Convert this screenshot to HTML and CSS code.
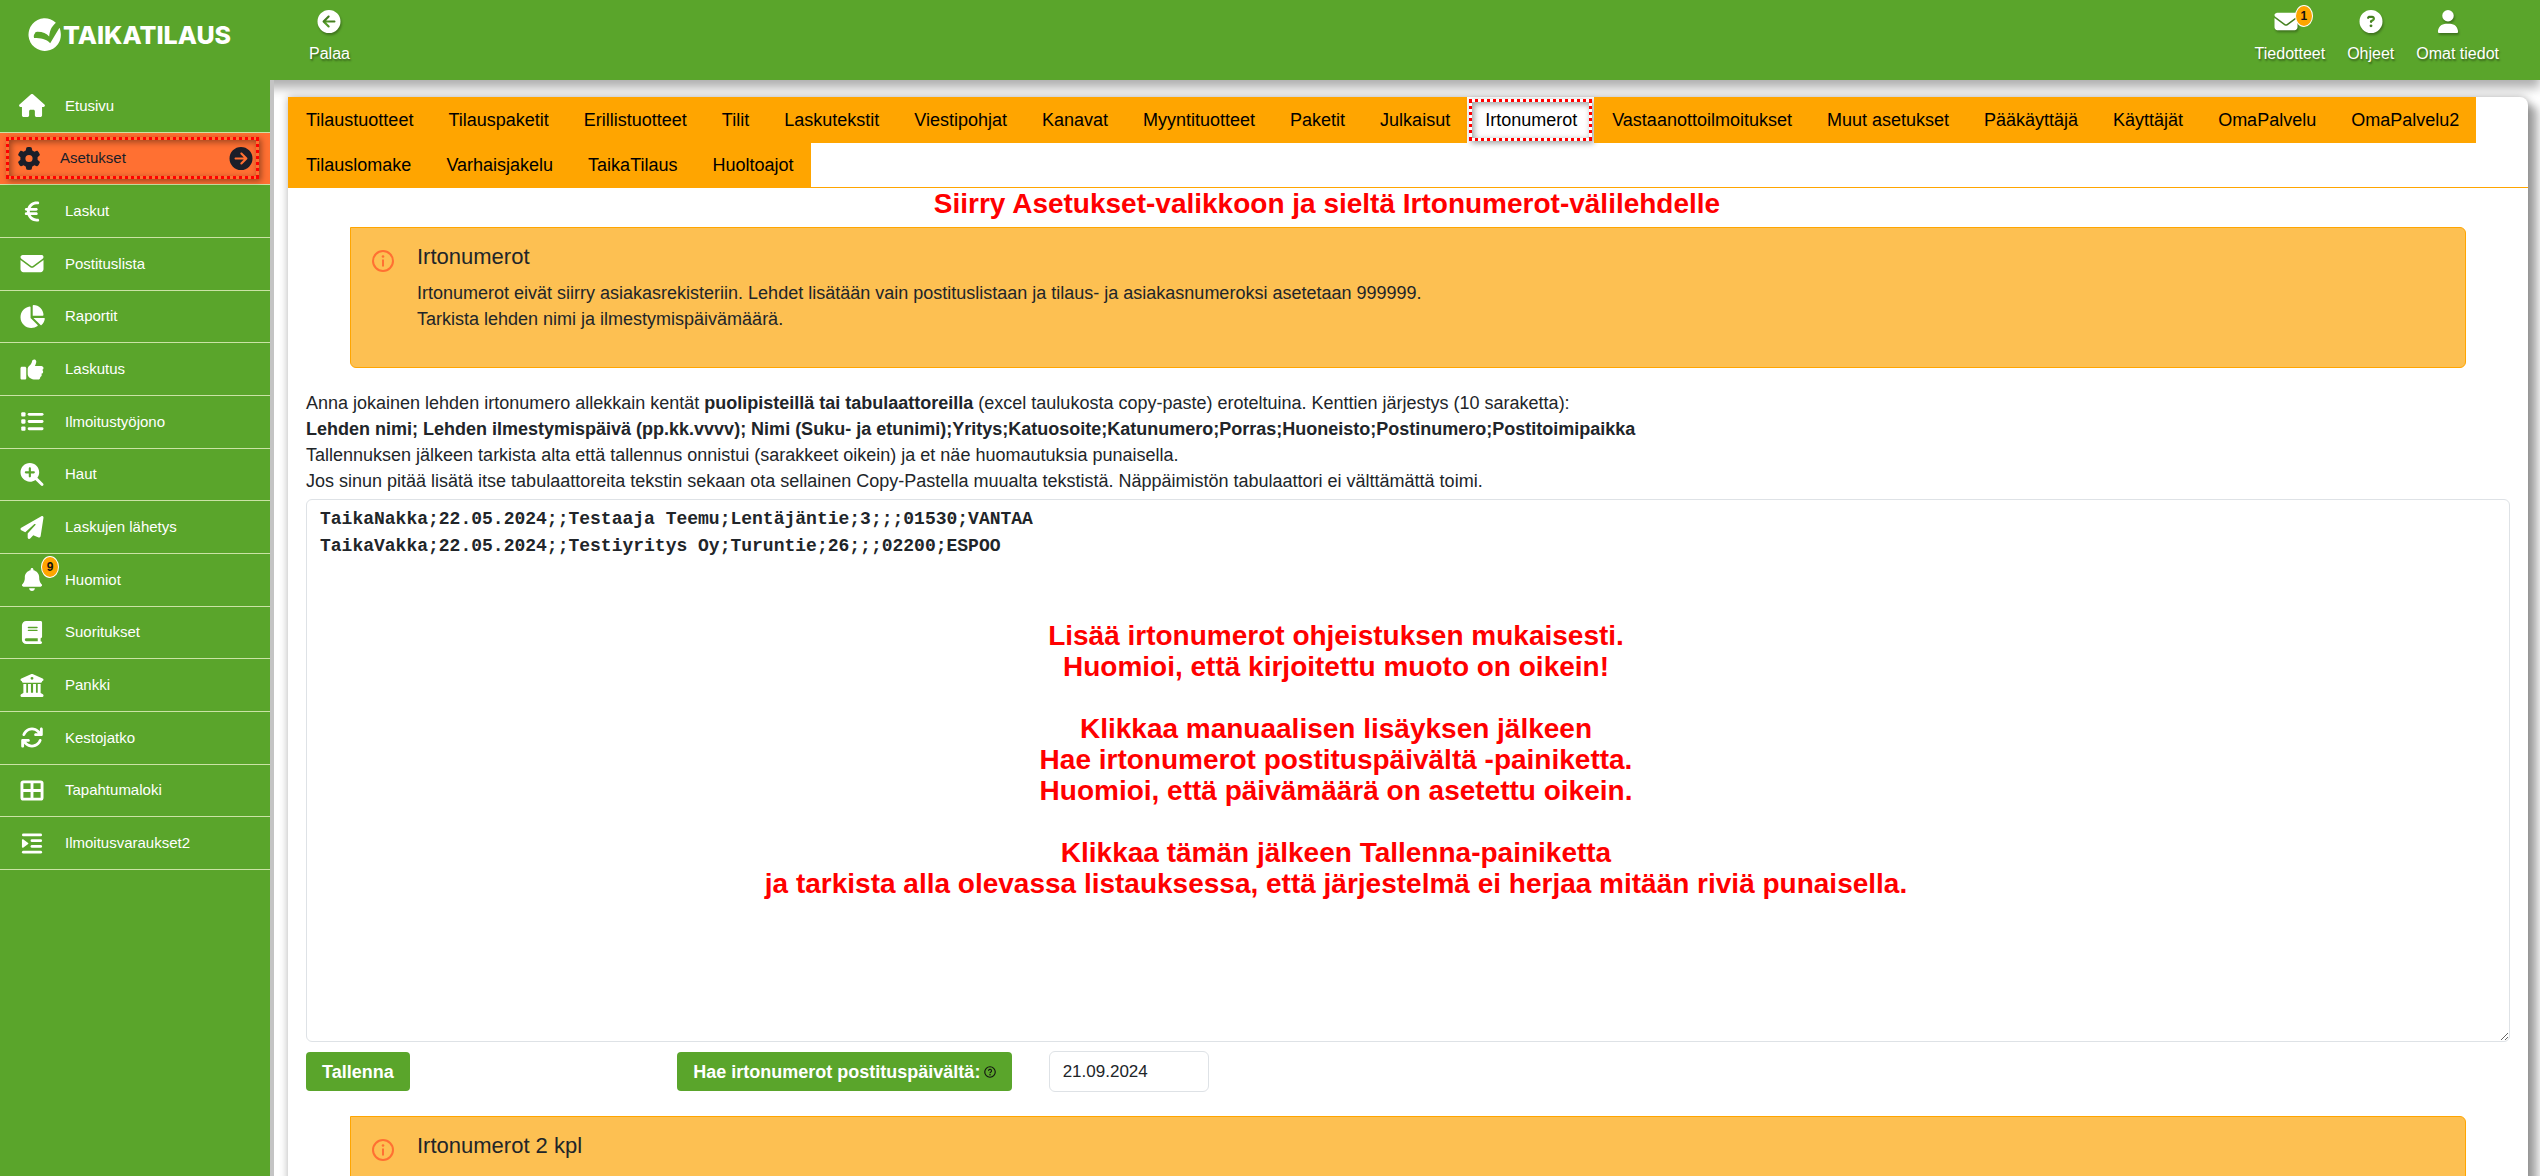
FILE: index.html
```html
<!DOCTYPE html>
<html lang="fi">
<head>
<meta charset="utf-8">
<meta name="viewport" content="width=device-width, initial-scale=1">
<title>TaikaTilaus – Irtonumerot</title>
<link rel="stylesheet" href="styles.css">
</head>
<body>
<svg class="sprite" aria-hidden="true">
  <symbol id="i-house" viewBox="0 0 576 512"><path d="M575.8 255.5c0 18-15 32.1-32 32.1h-32l.7 160.2c0 2.7-.2 5.4-.5 8.1V472c0 22.1-17.9 40-40 40H456c-1.1 0-2.2 0-3.3-.1c-1.4 .1-2.8 .1-4.2 .1H416 392c-22.1 0-40-17.9-40-40V448 384c0-17.7-14.3-32-32-32H256c-17.7 0-32 14.3-32 32v64 24c0 22.1-17.9 40-40 40H160 128.1c-1.5 0-3-.1-4.5-.2c-1.2 .1-2.4 .2-3.6 .2H104c-22.1 0-40-17.9-40-40V360c0-.9 0-1.9 .1-2.8V287.6H32c-18 0-32-14-32-32.1c0-9 3-17 10-24L266.4 8c7-7 15-8 22-8s15 2 21 7L564.8 231.5c8 7 12 15 11 24z"/></symbol>
  <symbol id="i-gear" viewBox="0 0 512 512"><path d="M495.9 166.6c3.2 8.7 .5 18.4-6.4 24.6l-43.3 39.4c1.1 8.3 1.7 16.8 1.7 25.4s-.6 17.1-1.7 25.4l43.3 39.4c6.9 6.2 9.6 15.9 6.4 24.6c-4.4 11.9-9.7 23.3-15.8 34.3l-4.7 8.1c-6.6 11-14 21.4-22.1 31.2c-5.9 7.2-15.7 9.6-24.5 6.8l-55.7-17.7c-13.4 10.3-28.2 18.9-44 25.4l-12.5 57.1c-2 9.1-9 16.3-18.2 17.8c-13.8 2.3-28 3.5-42.5 3.5s-28.7-1.2-42.5-3.5c-9.2-1.5-16.2-8.7-18.2-17.8l-12.5-57.1c-15.8-6.5-30.6-15.1-44-25.4L83.1 425.9c-8.8 2.8-18.6 .3-24.5-6.8c-8.1-9.8-15.5-20.2-22.1-31.2l-4.7-8.1c-6.1-11-11.4-22.4-15.8-34.3c-3.2-8.7-.5-18.4 6.4-24.6l43.3-39.4C64.6 273.1 64 264.6 64 256s.6-17.1 1.7-25.4L22.4 191.2c-6.9-6.2-9.6-15.9-6.4-24.6c4.4-11.9 9.7-23.3 15.8-34.3l4.7-8.1c6.6-11 14-21.4 22.1-31.2c5.9-7.2 15.7-9.6 24.5-6.8l55.7 17.7c13.4-10.3 28.2-18.9 44-25.4l12.5-57.1c2-9.1 9-16.3 18.2-17.8C227.3 1.2 241.5 0 256 0s28.7 1.2 42.5 3.5c9.2 1.5 16.2 8.7 18.2 17.8l12.5 57.1c15.8 6.5 30.6 15.1 44 25.4l55.7-17.7c8.8-2.8 18.6-.3 24.5 6.8c8.1 9.8 15.5 20.2 22.1 31.2l4.7 8.1c6.1 11 11.4 22.4 15.8 34.3zM256 336a80 80 0 1 0 0-160 80 80 0 1 0 0 160z"/></symbol>
  <symbol id="i-euro" viewBox="0 0 320 512"><path d="M48.1 240c-.1 2.7-.1 5.3-.1 8v16c0 2.7 0 5.3 .1 8H32c-17.7 0-32 14.3-32 32s14.3 32 32 32H60.3C89.9 419.9 170 480 264 480h24c17.7 0 32-14.3 32-32s-14.3-32-32-32H264c-57.9 0-108.2-32.4-133.9-80H256c17.7 0 32-14.3 32-32s-14.3-32-32-32H112.2c-.1-2.6-.2-5.3-.2-8V248c0-2.7 .1-5.4 .2-8H256c17.7 0 32-14.3 32-32s-14.3-32-32-32H130.1c25.7-47.6 76-80 133.9-80h24c17.7 0 32-14.3 32-32s-14.3-32-32-32H264C170 32 89.9 92.1 60.3 176H32c-17.7 0-32 14.3-32 32s14.3 32 32 32H48.1z"/></symbol>
  <symbol id="i-mail" viewBox="0 0 512 512"><path d="M48 64C21.5 64 0 85.5 0 112c0 15.1 7.1 29.3 19.2 38.4L236.8 313.6c11.4 8.5 27 8.5 38.4 0L492.8 150.4c12.1-9.1 19.2-23.3 19.2-38.4c0-26.5-21.5-48-48-48H48zM0 176V384c0 35.3 28.7 64 64 64H448c35.3 0 64-28.7 64-64V176L294.4 339.2c-22.8 17.1-54 17.1-76.8 0L0 176z"/></symbol>
  <symbol id="i-pie" viewBox="0 0 576 512"><path d="M304 240V16.6c0-9 7-16.6 16-16.6C443.7 0 544 100.3 544 224c0 9-7.6 16-16.6 16H304zM32 272C32 150.7 122.1 50.3 239 34.3c9.2-1.3 17 6.1 17 15.4V288L412.5 444.5c6.7 6.7 6.2 17.7-1.5 23.1C371.8 495.6 323.8 512 272 512C139.5 512 32 404.6 32 272zm526.4 16c9.3 0 16.6 7.8 15.4 17c-7.7 55.9-34.6 105.6-73.9 142.3c-6 5.6-15.4 5.2-21.2-.7L320 288H558.4z"/></symbol>
  <symbol id="i-thumb" viewBox="0 0 512 512"><path d="M313.4 32.9c26 5.2 42.9 30.5 37.7 56.5l-2.3 11.4c-5.3 26.7-15.1 52.1-28.8 75.2H464c26.5 0 48 21.5 48 48c0 18.5-10.5 34.6-25.9 42.6C497 275.4 504 288.9 504 304c0 23.4-16.8 42.9-38.9 47.1c4.4 7.3 6.9 15.8 6.9 24.9c0 21.3-13.9 39.4-33.1 45.6c.7 3.3 1.1 6.8 1.1 10.4c0 26.5-21.5 48-48 48H294.5c-19 0-37.5-5.6-53.3-16.1l-38.5-25.7C176 420.4 160 390.4 160 358.3V320 272 247.1c0-29.2 13.3-56.7 36-75l7.4-5.9c26.5-21.2 44.6-51 51.2-84.2l2.3-11.4c5.2-26 30.5-42.9 56.5-37.7zM32 192H96c17.7 0 32 14.3 32 32V448c0 17.7-14.3 32-32 32H32c-17.7 0-32-14.3-32-32V224c0-17.7 14.3-32 32-32z"/></symbol>
  <symbol id="i-list" viewBox="0 0 512 512"><rect x="16" y="48" width="96" height="96" rx="24"/><rect x="16" y="208" width="96" height="96" rx="24"/><rect x="16" y="368" width="96" height="96" rx="24"/><rect x="160" y="64" width="352" height="64" rx="32"/><rect x="160" y="224" width="352" height="64" rx="32"/><rect x="160" y="384" width="352" height="64" rx="32"/></symbol>
  <symbol id="i-search" viewBox="0 0 512 512"><path d="M416 208c0 45.9-14.9 88.3-40 122.7L502.6 457.4c12.5 12.5 12.5 32.8 0 45.3s-32.8 12.5-45.3 0L330.7 376c-34.4 25.2-76.8 40-122.7 40C93.1 416 0 322.9 0 208S93.1 0 208 0S416 93.1 416 208zM184 296c0 13.3 10.7 24 24 24s24-10.7 24-24V232h64c13.3 0 24-10.7 24-24s-10.7-24-24-24H232V120c0-13.3-10.7-24-24-24s-24 10.7-24 24v64H120c-13.3 0-24 10.7-24 24s10.7 24 24 24h64v64z"/></symbol>
  <symbol id="i-plane" viewBox="0 0 512 512"><path d="M498.1 5.6c10.1 7 15.4 19.1 13.5 31.2l-64 416c-1.5 9.7-7.4 18.2-16 23s-18.9 5.4-28 1.6L284 427.7l-68.5 74.1c-8.9 9.7-22.9 12.9-35.2 8.1S160 493.2 160 480V396.4c0-4 1.5-7.8 4.2-10.7L331.8 202.8c5.8-6.3 5.6-16-.4-22s-15.7-6.4-22-.7L106 360.8 17.7 316.6C7.1 311.3 .3 300.7 0 288.9s5.9-22.8 16.1-28.7l448-256c10.7-6.1 23.9-5.5 34 1.4z"/></symbol>
  <symbol id="i-bell" viewBox="0 0 448 512"><path d="M224 0c-17.7 0-32 14.3-32 32V51.2C119 66 64 130.6 64 208v18.8c0 47-17.3 92.4-48.5 127.6l-7.4 8.3c-8.4 9.4-10.4 22.9-5.3 34.4S19.4 416 32 416H416c12.6 0 24-7.4 29.2-18.9s3.1-25-5.3-34.4l-7.4-8.3C401.3 319.2 384 273.9 384 226.8V208c0-77.4-55-142-128-156.8V32c0-17.7-14.3-32-32-32zm45.3 493.3c12-12 18.7-28.3 18.7-45.3H224 160c0 17 6.7 33.3 18.7 45.3s28.3 18.7 45.3 18.7s33.3-6.7 45.3-18.7z"/></symbol>
  <symbol id="i-book" viewBox="0 0 448 512"><path d="M96 0C43 0 0 43 0 96V416c0 53 43 96 96 96H384h32c17.7 0 32-14.3 32-32s-14.3-32-32-32V384c17.7 0 32-14.3 32-32V32c0-17.7-14.3-32-32-32H384 96zm0 384H352v64H96c-17.7 0-32-14.3-32-32s14.3-32 32-32zm32-240c0-8.8 7.2-16 16-16H336c8.8 0 16 7.2 16 16s-7.2 16-16 16H144c-8.8 0-16-7.2-16-16zm16 48H336c8.8 0 16 7.2 16 16s-7.2 16-16 16H144c-8.8 0-16-7.2-16-16s7.2-16 16-16z"/></symbol>
  <symbol id="i-bank" viewBox="0 0 512 512"><path d="M243.4 2.6l-224 96c-14 6-21.8 21-18.7 35.8S16.8 160 32 160v8c0 13.3 10.7 24 24 24H456c13.3 0 24-10.7 24-24v-8c15.2 0 28.3-10.7 31.3-25.6s-4.8-29.9-18.7-35.8l-224-96c-8-3.4-17.2-3.4-25.2 0zM128 224H64V420.3c-.6 .3-1.2 .7-1.8 1.1l-48 32c-11.7 7.8-17 22.4-12.9 35.9S17.9 512 32 512H480c14.1 0 26.5-9.2 30.6-22.7s-1.1-28.1-12.9-35.9l-48-32c-.6-.4-1.2-.7-1.8-1.1V224H384V416H344V224H280V416H232V224H168V416H128V224zM256 64a32 32 0 1 1 0 64 32 32 0 1 1 0-64z"/></symbol>
  <symbol id="i-rotate" viewBox="0 0 512 512"><path d="M105.1 202.6c7.7-21.8 20.2-42.3 37.8-59.8c62.5-62.5 163.8-62.5 226.3 0L386.3 160H336c-17.7 0-32 14.3-32 32s14.3 32 32 32H463.5h.4c17.7 0 32-14.3 32-32V64c0-17.7-14.3-32-32-32s-32 14.3-32 32v51.2L414.4 97.6c-87.5-87.5-229.3-87.5-316.8 0C73.2 122 55.6 150.7 44.8 181.4c-5.9 16.7 2.9 34.9 19.5 40.8s34.9-2.9 40.8-19.5zM39 289.3c-5 1.5-9.8 4.2-13.7 8.2c-4 4-6.7 8.8-8.1 14c-.3 1.2-.6 2.5-.8 3.8c-.3 1.7-.4 3.4-.4 5.1V448c0 17.7 14.3 32 32 32s32-14.3 32-32V396.9l17.6 17.5c87.5 87.4 229.3 87.4 316.7 0c24.4-24.4 42.1-53.1 52.9-83.7c5.9-16.7-2.9-34.9-19.5-40.8s-34.9 2.9-40.8 19.5c-7.7 21.8-20.2 42.3-37.8 59.8c-62.5 62.5-163.8 62.5-226.3 0l-.1-.1L125.6 352H176c17.7 0 32-14.3 32-32s-14.3-32-32-32H48.4c-1.6 0-3.2 .1-4.8 .3s-3.1 .5-4.6 1z"/></symbol>
  <symbol id="i-table" viewBox="0 0 512 512"><path fill-rule="evenodd" d="M64 32H448a64 64 0 0 1 64 64V416a64 64 0 0 1-64 64H64a64 64 0 0 1-64-64V96a64 64 0 0 1 64-64zM64 96V224H224V96zM288 96V224H448V96zM64 288V416H224V288zM288 288V416H448V288z"/></symbol>
  <symbol id="i-indent" viewBox="0 0 448 512"><rect y="32" width="448" height="64" rx="32"/><rect x="192" y="160" width="256" height="64" rx="32"/><rect x="192" y="288" width="256" height="64" rx="32"/><rect y="416" width="448" height="64" rx="32"/><path d="M0 178c0-16 15-24 26-14l112 79c9 7 9 19 0 26L26 348c-11 10-26 2-26-13z"/></symbol>
  <symbol id="i-arrow" viewBox="0 0 512 512"><path fill-rule="evenodd" d="M512 256A256 256 0 1 0 0 256a256 256 0 1 0 512 0zM231 127c9.400-9.400 24.600-9.400 33.900 0s9.400 24.600 0 33.900l-71 71L376 232c13.300 0 24 10.700 24 24s-10.700 24-24 24l-182.100 0 71 71c9.400 9.400 9.400 24.600 0 33.900s-24.600 9.400-33.900 0L119 273c-9.400-9.400-9.400-24.600 0-33.900L231 127z"/></symbol>
  <symbol id="i-question" viewBox="0 0 512 512"><path fill-rule="evenodd" d="M256 512A256 256 0 1 0 256 0a256 256 0 1 0 0 512zM169.800 165.300c7.900-22.300 29.100-37.300 52.800-37.300h58.300c34.900 0 63.100 28.300 63.100 63.100c0 22.600-12.100 43.500-31.700 54.800L280 264.400c-.2 13-10.900 23.600-24 23.600c-13.300 0-24-10.700-24-24V250.500c0-8.600 4.600-16.500 12.100-20.800l44.300-25.400c4.700-2.700 7.600-7.700 7.600-13.100c0-8.400-6.800-15.100-15.100-15.100H222.600c-3.400 0-6.400 2.100-7.500 5.300l-.4 1.200c-4.400 12.500-18.200 19-30.700 14.600s-19-18.200-14.600-30.700l.4-1.200zM224 352a32 32 0 1 1 64 0 32 32 0 1 1 -64 0z"/></symbol>
  <symbol id="i-question-o" viewBox="0 0 16 16"><circle cx="8" cy="8" r="7" fill="none" stroke="currentColor" stroke-width="1.500"/><path d="M6 6.500a2 2 0 1 1 2.800 1.800c-.6.300-.8.600-.8 1.200" fill="none" stroke="currentColor" stroke-width="1.400"/><circle cx="8" cy="11.700" r="1"/></symbol>
  <symbol id="i-user" viewBox="0 0 448 512"><path d="M224 256A128 128 0 1 0 224 0a128 128 0 1 0 0 256zm-45.700 48C79.800 304 0 383.800 0 482.300C0 498.700 13.300 512 29.700 512H418.300c16.400 0 29.700-13.300 29.700-29.700C448 383.800 368.200 304 269.700 304H178.300z"/></symbol>
  <symbol id="i-info" viewBox="0 0 22 22"><circle cx="11" cy="11" r="10" fill="none" stroke="currentColor" stroke-width="2"/><circle cx="11" cy="6.500" r="1.300"/><path d="M10 9.500h2v7h-2z"/></symbol>
  <symbol id="i-logo" viewBox="0 0 32 32"><path d="M27 4.500A15.800 15.800 0 1 0 29 25.500C32.500 21 32.500 14 30.500 9.500L21.500 24.500C18 20.500 12 19.500 6 19.500C5 17 6 15 8 13.500C13 13 18 15 20.500 18C21 13 22 9 27 4.500z"/><path d="M7 16.500c6-1 10 1 13.500 5M7 14.500c6-.5 10.500 1.500 13.500 5.500" fill="none" stroke="#5aa52b" stroke-width="1"/></symbol>
</svg>

<div class="app">
  <header class="topbar">
    <a class="brand" href="#"><svg class="brand-mark"><use href="#i-logo"/></svg><span>TAIKATILAUS</span></a>
    <a class="top-link" href="#"><svg class="icon"><use href="#i-arrow"/></svg><span>Palaa</span></a>
    <nav class="top-links">
      <a class="top-link" href="#"><span class="icon-wrap with-badge"><svg class="icon"><use href="#i-mail"/></svg><b class="badge">1</b></span><span>Tiedotteet</span></a>
      <a class="top-link" href="#"><svg class="icon"><use href="#i-question"/></svg><span>Ohjeet</span></a>
      <a class="top-link" href="#"><span class="icon-wrap with-caret"><svg class="icon"><use href="#i-user"/></svg></span><span>Omat tiedot</span></a>
    </nav>
  </header>

  <div class="body">
    <nav class="sidebar">
      <ul class="menu">
        <li><a href="#"><svg class="icon"><use href="#i-house"/></svg>Etusivu</a></li>
        <li class="active"><a href="#"><svg class="icon"><use href="#i-gear"/></svg>Asetukset<svg class="icon go"><use href="#i-arrow"/></svg></a><span class="marker"></span></li>
        <li><a href="#"><svg class="icon"><use href="#i-euro"/></svg>Laskut</a></li>
        <li><a href="#"><svg class="icon"><use href="#i-mail"/></svg>Postituslista</a></li>
        <li><a href="#"><svg class="icon"><use href="#i-pie"/></svg>Raportit</a></li>
        <li><a href="#"><svg class="icon"><use href="#i-thumb"/></svg>Laskutus</a></li>
        <li><a href="#"><svg class="icon"><use href="#i-list"/></svg>Ilmoitustyöjono</a></li>
        <li><a href="#"><svg class="icon"><use href="#i-search"/></svg>Haut</a></li>
        <li><a href="#"><svg class="icon"><use href="#i-plane"/></svg>Laskujen lähetys</a></li>
        <li><a href="#"><span class="icon-wrap"><svg class="icon"><use href="#i-bell"/></svg><b class="badge">9</b></span>Huomiot</a></li>
        <li><a href="#"><svg class="icon"><use href="#i-book"/></svg>Suoritukset</a></li>
        <li><a href="#"><svg class="icon"><use href="#i-bank"/></svg>Pankki</a></li>
        <li><a href="#"><svg class="icon"><use href="#i-rotate"/></svg>Kestojatko</a></li>
        <li><a href="#"><svg class="icon"><use href="#i-table"/></svg>Tapahtumaloki</a></li>
        <li><a href="#"><svg class="icon"><use href="#i-indent"/></svg>Ilmoitusvaraukset2</a></li>
      </ul>
    </nav>

    <main class="main">
      <div class="panel">
        <ul class="tabs">
          <li><a href="#">Tilaustuotteet</a></li>
          <li><a href="#">Tilauspaketit</a></li>
          <li><a href="#">Erillistuotteet</a></li>
          <li><a href="#">Tilit</a></li>
          <li><a href="#">Laskutekstit</a></li>
          <li><a href="#">Viestipohjat</a></li>
          <li><a href="#">Kanavat</a></li>
          <li><a href="#">Myyntituotteet</a></li>
          <li><a href="#">Paketit</a></li>
          <li><a href="#">Julkaisut</a></li>
          <li class="current"><a href="#">Irtonumerot</a><span class="marker"></span></li>
          <li><a href="#">Vastaanottoilmoitukset</a></li>
          <li><a href="#">Muut asetukset</a></li>
          <li><a href="#">Pääkäyttäjä</a></li>
          <li><a href="#">Käyttäjät</a></li>
          <li><a href="#">OmaPalvelu</a></li>
          <li><a href="#">OmaPalvelu2</a></li>
          <li><a href="#">Tilauslomake</a></li>
          <li><a href="#">Varhaisjakelu</a></li>
          <li><a href="#">TaikaTilaus</a></li>
          <li><a href="#">Huoltoajot</a></li>
        </ul>

        <p class="note note-top">Siirry Asetukset-valikkoon ja sieltä Irtonumerot-välilehdelle</p>

        <section class="alert">
          <svg class="info"><use href="#i-info"/></svg>
          <div>
            <h2>Irtonumerot</h2>
            <p>Irtonumerot eivät siirry asiakasrekisteriin. Lehdet lisätään vain postituslistaan ja tilaus- ja asiakasnumeroksi asetetaan 999999.<br>Tarkista lehden nimi ja ilmestymispäivämäärä.</p>
          </div>
        </section>

        <form class="form">
          <label class="help" for="rows">Anna jokainen lehden irtonumero allekkain kentät <b>puolipisteillä tai tabulaattoreilla</b> (excel taulukosta copy-paste) eroteltuina. Kenttien järjestys (10 saraketta):<br>
          <b>Lehden nimi; Lehden ilmestymispäivä (pp.kk.vvvv); Nimi (Suku- ja etunimi);Yritys;Katuosoite;Katunumero;Porras;Huoneisto;Postinumero;Postitoimipaikka</b><br>
          Tallennuksen jälkeen tarkista alta että tallennus onnistui (sarakkeet oikein) ja et näe huomautuksia punaisella.<br>
          Jos sinun pitää lisätä itse tabulaattoreita tekstin sekaan ota sellainen Copy-Pastella muualta tekstistä. Näppäimistön tabulaattori ei välttämättä toimi.</label>
          <div class="editor">
            <textarea id="rows" rows="20" spellcheck="false">TaikaNakka;22.05.2024;;Testaaja Teemu;Lentäjäntie;3;;;01530;VANTAA
TaikaVakka;22.05.2024;;Testiyritys Oy;Turuntie;26;;;02200;ESPOO</textarea>
            <p class="note note-over">Lisää irtonumerot ohjeistuksen mukaisesti.<br>Huomioi, että kirjoitettu muoto on oikein!<br><br>Klikkaa manuaalisen lisäyksen jälkeen<br>Hae irtonumerot postituspäivältä -painiketta.<br>Huomioi, että päivämäärä on asetettu oikein.<br><br>Klikkaa tämän jälkeen Tallenna-painiketta<br>ja tarkista alla olevassa listauksessa, että järjestelmä ei herjaa mitään riviä punaisella.</p>
          </div>
          <div class="actions">
            <div><button class="btn" type="button">Tallenna</button></div>
            <div><button class="btn" type="button" id="fetch">Hae irtonumerot postituspäivältä: <svg class="hint"><use href="#i-question-o"/></svg></button></div>
            <div><input class="date" type="text" value="21.09.2024" aria-labelledby="fetch"></div>
          </div>
        </form>

        <section class="alert">
          <svg class="info"><use href="#i-info"/></svg>
          <div><h2>Irtonumerot 2 kpl</h2></div>
        </section>
      </div>
    </main>
  </div>
</div>
</body>
</html>
```
FILE: styles.css
```css
:root {
  --green: #5aa52b;
  --orange: #ffa500;
  --active: #ff7032;
  --ink: #212529;
}
* { box-sizing: border-box; }
body {
  margin: 0;
  background: #fff;
  color: var(--ink);
  font: 18px/26px "Liberation Sans", Arial, sans-serif;
}
ul { list-style: none; margin: 0; padding: 0; }
p, h2 { margin: 0; }
a { color: inherit; text-decoration: none; }
svg { fill: currentColor; display: block; }
.sprite { position: absolute; width: 0; height: 0; }
.icon { width: 26px; height: 23px; flex: none; }

.app { display: flex; flex-direction: column; height: 100vh; overflow: hidden; }
.body { display: flex; flex: 1; min-height: 0; }

/* top bar */
.topbar {
  position: relative;
  z-index: 1;
  display: flex;
  align-items: flex-start;
  height: 80px;
  flex: none;
  padding: 0 41px 0 28px;
  background: var(--green);
  color: #fff;
  box-shadow: 0 8px 10px #b0b0b0;
}
.brand { display: flex; align-items: center; gap: 2px; width: 281px; padding-top: 18px; font: 800 25px/32px Inter, sans-serif; }
.brand-mark { width: 33px; height: 33px; }
.top-link {
  display: flex;
  flex-direction: column;
  align-items: center;
  gap: 9px;
  padding-top: 10px;
  font-size: 16px;
  line-height: 24px;
  text-shadow: 1px 2px 2px rgba(0, 0, 0, .4);
}
.top-link .icon { filter: drop-shadow(1px 2px 1px rgba(0, 0, 0, .3)); }
.top-links { display: flex; gap: 22px; margin-left: auto; }
.icon-wrap { position: relative; }
.with-badge { padding-right: 8px; }
.with-caret { padding-right: 20px; }
.badge {
  position: absolute;
  top: -5px;
  left: 22px;
  width: 18px;
  height: 22px;
  border: 1px solid #fff;
  border-radius: 50%;
  background: var(--orange);
  color: #111;
  font-size: 12px;
  line-height: 20px;
  text-align: center;
  text-shadow: none;
}

/* sidebar */
.sidebar {
  position: relative;
  z-index: 2;
  width: 274px;
  flex: none;
  background: var(--green);
  border-right: 4px solid #c4c4c4;
  color: #fff;
  font-size: 15px;
}
.menu { display: grid; grid-auto-rows: 1fr; min-height: 790px; }
.menu li { position: relative; display: flex; border-bottom: 1px solid #cbe3a5; }
.menu a { display: flex; flex: 1; align-items: center; gap: 20px; padding: 0 19px; }
.menu .active { background: var(--active); color: #1b1e29; }
.menu .active a { gap: 18px; padding: 0 16px; }
.active .go { margin-left: auto; transform: scaleX(-1); }
.menu .badge { top: -12px; }
.marker {
  position: absolute;
  inset: 4px 11px 5px 6px;
  border: 3px dotted #f00;
  box-shadow: 2px 2px 6px rgba(0, 0, 0, .4), inset 2px 2px 6px rgba(0, 0, 0, .4);
  pointer-events: none;
}

/* main panel */
.main { flex: 1; min-width: 0; padding: 17px 12px 0 14px; }
.panel {
  position: relative;
  z-index: 1;
  background: #fff;
  border-radius: 0 8px 0 0;
  min-height: 100%;
  box-shadow: 0 0 8px rgba(0, 0, 0, .3), 10px 8px 8px #b0b0b0;
}
.tabs { display: flex; flex-wrap: wrap; border-bottom: 1px solid var(--orange); }
.tabs li { position: relative; margin-bottom: -1px; background: var(--orange); color: #000; }
.tabs a { display: block; padding: 10px 17px 10px 18px; }
.tabs .current { background: #fff; }
.tabs .marker { inset: 2px; }

.note { color: #f00; font-size: 28px; font-weight: 700; line-height: 31px; text-align: center; }
.note-top { padding: 0 162px 8px 0; }

.alert {
  display: flex;
  gap: 23px;
  margin: 0 62px;
  padding: 16px 21px;
  min-height: 141px;
  background: #fdc052;
  border: 1px solid var(--orange);
  border-radius: 0 6px 6px 6px;
}
.info { width: 22px; height: 22px; margin-top: 6px; color: var(--active); flex: none; }
.alert h2 { margin-bottom: 10px; font-size: 22px; font-weight: 400; line-height: 26px; }

.form { padding: 22px 18px 24px; }
.help { display: block; margin-bottom: 5px; }
.editor { position: relative; }
textarea {
  display: block;
  width: 100%;
  height: 543px;
  padding: 6px 13px;
  border: 1px solid #dee2e6;
  border-radius: 6px;
  color: var(--ink);
  font: 700 18px/27px "Liberation Mono", "Courier New", monospace;
  outline: none;
}
.note-over { position: absolute; inset: 121px 0 auto; padding-right: 144px; pointer-events: none; }
.actions { display: grid; grid-template-columns: repeat(6, 1fr); gap: 24px; align-items: center; margin-top: 9px; }
.btn {
  display: flex;
  align-items: center;
  gap: 4px;
  height: 39px;
  padding: 0 16px;
  border: 0;
  border-radius: 4px;
  background: var(--green);
  color: #fff;
  font: 700 18px/26px "Liberation Sans", Arial, sans-serif;
  white-space: nowrap;
}
.hint { width: 12px; height: 12px; color: #111; }
.date {
  width: 160px;
  height: 41px;
  padding: 0 13px;
  border: 1px solid #dee2e6;
  border-radius: 6px;
  color: var(--ink);
  font: 17px "Liberation Sans", Arial, sans-serif;
}
```
